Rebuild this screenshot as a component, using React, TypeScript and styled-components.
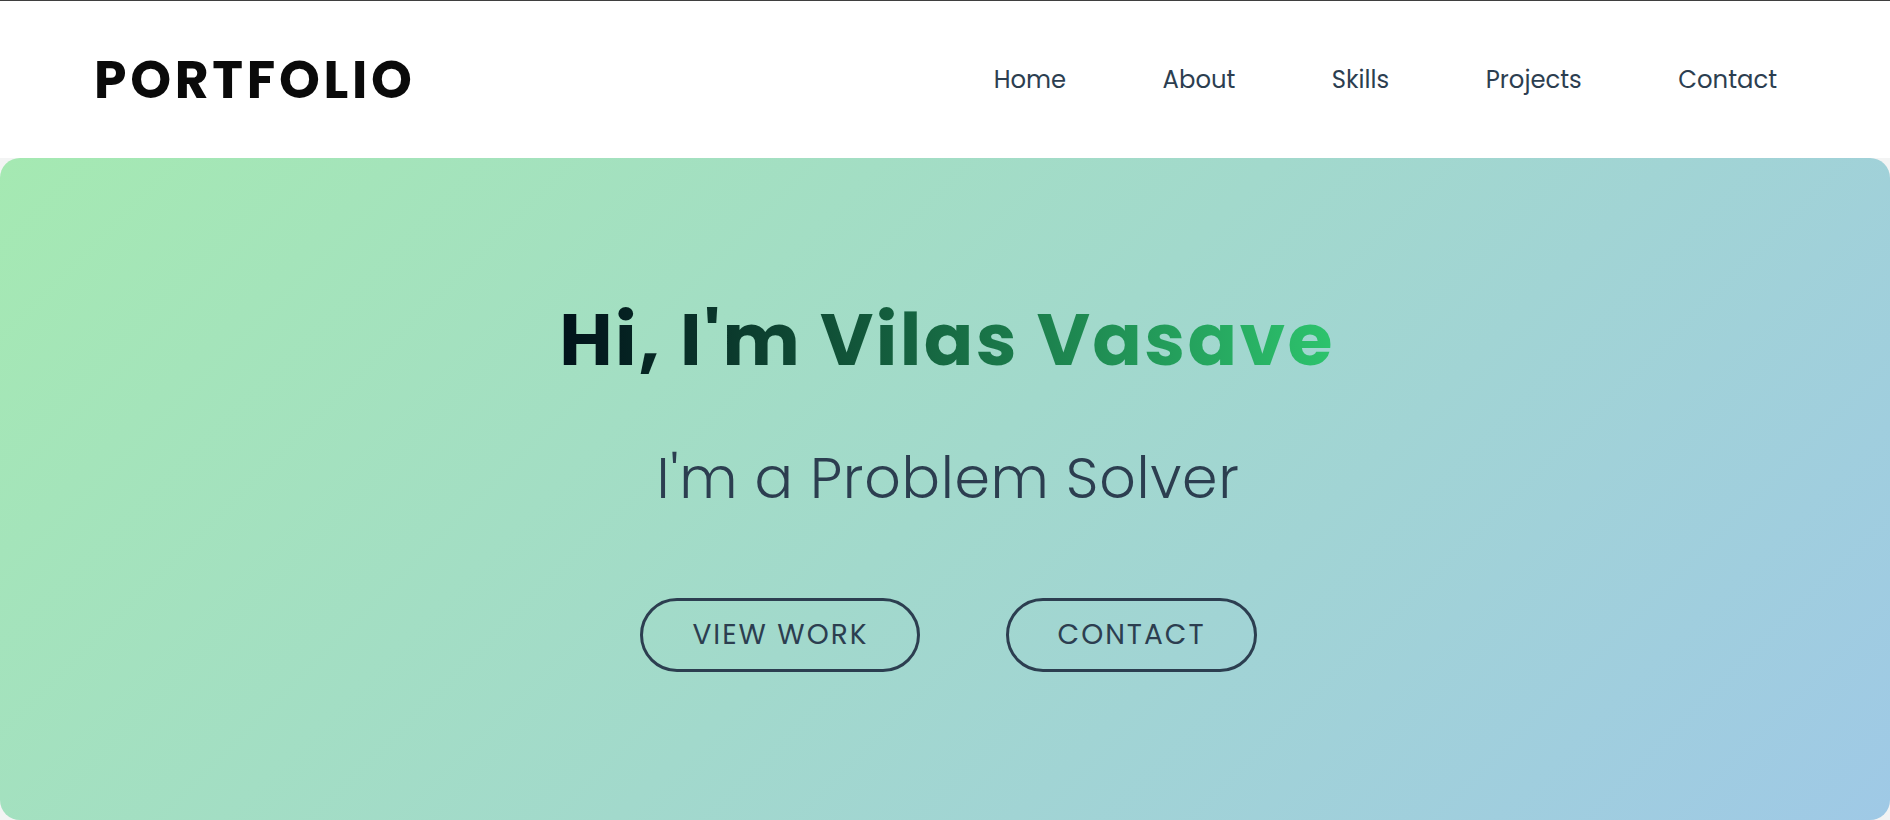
import React from "react";
import styled, { createGlobalStyle } from "styled-components";

const GlobalStyle = createGlobalStyle`
  html, body {
    margin: 0;
    padding: 0;
    background: #f3f4f4;
  }
  body {
    font-family: "Poppins", "Inter", "Noto Sans", sans-serif;
    overflow: hidden;
  }
  * { box-sizing: border-box; }
`;

const Page = styled.div`
  width: 1890px;
  height: 820px;
  display: flex;
  flex-direction: column;
  border-top: 1px solid #3f3f3f;
`;

const Header = styled.header`
  height: 157px;
  flex: none;
  background: #ffffff;
  display: flex;
  align-items: center;
  justify-content: space-between;
  padding: 0 113px 0 94px;
`;

const Logo = styled.div`
  font-size: 52px;
  font-weight: 700;
  letter-spacing: 3.7px;
  color: #0a0a0a;
`;

const Nav = styled.nav`
  display: flex;
  align-items: center;
  gap: 96.5px;
`;

const NavLink = styled.a`
  font-size: 24.3px;
  font-weight: 400;
  color: #2c3e50;
  text-decoration: none;
  cursor: pointer;
`;

const Hero = styled.section`
  flex: 1;
  border-radius: 20px;
  background: linear-gradient(135deg, #a5e9b2 0%, #9fc9e6 100%);
  display: flex;
  flex-direction: column;
  align-items: center;
  padding-top: 138px;
`;

const Title = styled.h1`
  margin: 0 0 0 4px;
  font-size: 73px;
  line-height: 1.2;
  font-weight: 700;
  letter-spacing: 2.4px;
  background: linear-gradient(90deg, #01121a 0%, #2dc46d 100%);
  -webkit-background-clip: text;
  background-clip: text;
  color: transparent;
`;

const Subtitle = styled.p`
  margin: 60px 0 0 6px;
  font-size: 57px;
  line-height: 1.2;
  font-weight: 300;
  letter-spacing: 0.7px;
  color: #2c3e50;
`;

const Actions = styled.div`
  display: flex;
  gap: 86px;
  margin: 86px 0 0 7px;
`;

const OutlineButton = styled.button`
  height: 74px;
  padding: 0 48px 0 49px;
  border: 3px solid #2c3e50;
  border-radius: 40px;
  background: transparent;
  color: #2c3e50;
  font-family: inherit;
  font-size: 28px;
  font-weight: 400;
  letter-spacing: 2px;
  line-height: 1.2;
  cursor: pointer;
`;

export default function App() {
  return (
    <>
      <GlobalStyle />
      <Page>
        <Header>
          <Logo>PORTFOLIO</Logo>
          <Nav>
            <NavLink>Home</NavLink>
            <NavLink>About</NavLink>
            <NavLink>Skills</NavLink>
            <NavLink>Projects</NavLink>
            <NavLink>Contact</NavLink>
          </Nav>
        </Header>
        <Hero>
          <Title>Hi, I'm Vilas Vasave</Title>
          <Subtitle>I'm a Problem Solver</Subtitle>
          <Actions>
            <OutlineButton>VIEW WORK</OutlineButton>
            <OutlineButton>CONTACT</OutlineButton>
          </Actions>
        </Hero>
      </Page>
    </>
  );
}
